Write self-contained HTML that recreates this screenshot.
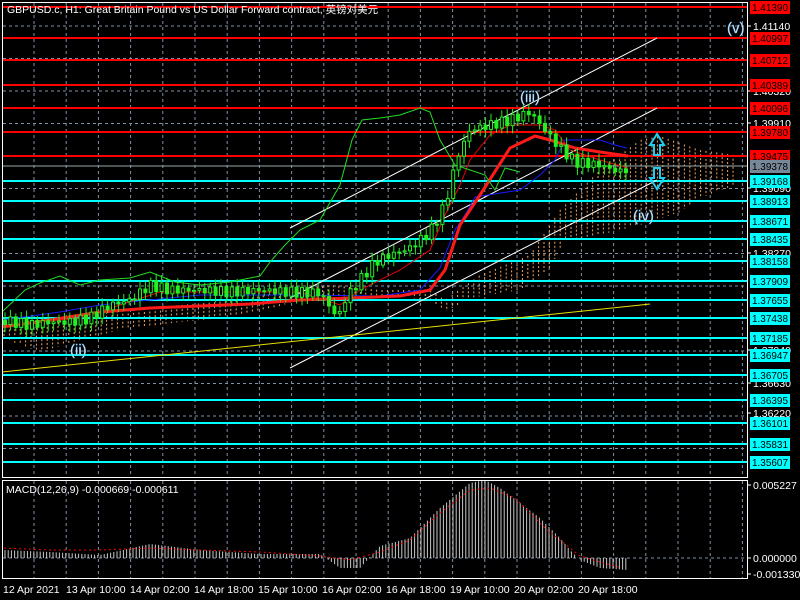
<!DOCTYPE html>
<html><head><meta charset="utf-8"><style>
html,body{margin:0;padding:0;background:#000;width:800px;height:600px;overflow:hidden}
svg{display:block}
text{font-family:"Liberation Sans","Noto Sans CJK SC",sans-serif}
</style></head><body>
<svg id="s" width="800" height="600" xmlns="http://www.w3.org/2000/svg">
<rect width="800" height="600" fill="#000"/>
<g id="grid" stroke="#8090a8" stroke-width="1" stroke-dasharray="3,3"></g>
<g id="cloud" stroke="#f4a460" stroke-width="1" stroke-dasharray="2,2"></g>
<g id="lv" stroke-width="2"></g>
<line x1="2" y1="166" x2="747" y2="166" stroke="#9aa" stroke-width="1"/>
<g stroke="#fff" stroke-width="1">
<line x1="290" y1="228" x2="657" y2="38"/>
<line x1="290" y1="298" x2="657" y2="108"/>
<line x1="290" y1="368" x2="657" y2="180"/>
</g>
<line x1="2" y1="372" x2="650" y2="304" stroke="#e8e000" stroke-width="1"/>
<polyline fill="none" stroke="#1a1aff" stroke-width="1" points="2,320 60,312 100,305 200,295 300,295 380,296 420,290 440,268 455,230 465,215 475,197 520,190 540,175 555,160 565,140 600,140 615,145 627,148"/>
<polyline fill="none" stroke="#ff1a1a" stroke-width="3" points="2,327 50,320 100,312 150,308 200,306 250,304 300,300 350,298 400,296 430,290 445,270 460,225 480,195 510,148 535,136 550,140 575,148 600,152 628,156"/>
<polyline fill="none" stroke="#e00" stroke-width="1" points="2,325 40,322 80,318 120,305 160,292 220,292 300,292 340,305 360,290 400,270 430,250 445,215 460,185 470,160 490,135 510,125 540,125 555,130 570,150 600,160 628,168"/>
<polyline fill="none" stroke="#22dd22" stroke-width="1" points="2,312 25,290 40,283 60,276 80,285 100,280 130,278 150,272 175,282 200,285 230,282 260,276 270,262 285,245 300,230 320,220 340,185 352,140 362,120 380,118 400,115 420,108 430,112 440,140 455,165 470,170 485,175 495,190 505,168 520,172"/>
<g id="candles"></g>
<g id="macd"></g>
<polyline id="sig" fill="none" stroke="#f00" stroke-width="1" stroke-dasharray="2,3"/>
<g fill="none" stroke="#22ccee" stroke-width="2">
<path d="M650,145 L657,134 L664,145 L660,145 L660,155 L654,155 L654,145 Z"/>
<path d="M654,168 L660,168 L660,178 L664,178 L657,189 L650,178 L654,178 Z"/>
</g>
<g font-size="15" fill="#e8f0ff" stroke="#5ad" stroke-width="0.4">
<text x="727" y="33">(v)</text>
<text x="520" y="102">(iii)</text>
<text x="633" y="221">(iv)</text>
<text x="70" y="355">(ii)</text>
</g>
<g stroke="#fff" fill="none" stroke-width="1">
<rect x="2.5" y="2.5" width="745" height="475"/>
<rect x="2.5" y="480.5" width="745" height="98"/>
</g>
<g id="axis" font-size="10.5"></g>
<text x="7" y="13" font-size="10.5" fill="#fff">GBPUSD.c, H1:  Great Britain Pound vs US Dollar Forward contract, 英镑对美元</text>
<text x="6" y="493" font-size="10.5" fill="#fff">MACD(12,26,9) -0.000669 -0.000611</text>
<g font-size="10.5" fill="#fff">
<text x="3" y="593">12 Apr 2021</text><text x="66" y="593">13 Apr 10:00</text><text x="130" y="593">14 Apr 02:00</text><text x="194" y="593">14 Apr 18:00</text><text x="258" y="593">15 Apr 10:00</text><text x="322" y="593">16 Apr 02:00</text><text x="386" y="593">16 Apr 18:00</text><text x="450" y="593">19 Apr 10:00</text><text x="514" y="593">20 Apr 02:00</text><text x="578" y="593">20 Apr 18:00</text>
</g>
</svg>
<script>
var NS="http://www.w3.org/2000/svg";
function el(p,t,a){var e=document.createElementNS(NS,t);for(var k in a)e.setAttribute(k,a[k]);p.appendChild(e);return e;}
var g=document.getElementById('grid');
for(var x=34;x<747;x+=32.2){el(g,'line',{x1:x,y1:3,x2:x,y2:477});el(g,'line',{x1:x,y1:481,x2:x,y2:578});}
for(var y=26;y<477;y+=32.5)el(g,'line',{x1:3,y1:y,x2:747,y2:y});
el(g,'line',{x1:3,y1:558,x2:747,y2:558});
var lv=document.getElementById('lv'),ax=document.getElementById('axis');
var reds=[[7,"1.41390"],[38,"1.40997"],[60,"1.40712"],[85,"1.40389"],[108,"1.40096"],[132,"1.39780"],[156,"1.39475"]];
var cy=[[181,"1.39168"],[201,"1.38913"],[221,"1.38671"],[239,"1.38435"],[261,"1.38158"],[281,"1.37909"],[300,"1.37655"],[318,"1.37438"],[338,"1.37185"],[355,"1.36947"],[375,"1.36705"],[400,"1.36395"],[423,"1.36101"],[444,"1.35831"],[462,"1.35607"]];
[[26,"1.41140"],[91,"1.40320"],[123,"1.39910"],[188,"1.39090"],[253,"1.38270"],[350,"1.37040"],[383,"1.36630"],[413,"1.36220"],[485,"0.005227"],[558,"0.000000"],[574,"-0.001330"]].forEach(function(a){el(ax,'line',{x1:747,y1:a[0],x2:751,y2:a[0],stroke:'#fff'});var t=el(ax,'text',{x:753,y:a[0]+4,fill:'#fff'});t.textContent=a[1];});
function lab(arr,c,tc){arr.forEach(function(a){el(lv,'line',{x1:3,y1:a[0],x2:747,y2:a[0],stroke:c});el(ax,'rect',{x:750,y:a[0]-6,width:40,height:13,fill:c});var t=el(ax,'text',{x:752,y:a[0]+4,fill:tc,textLength:36,lengthAdjust:'spacingAndGlyphs'});t.textContent=a[1];});}
lab(reds,'#ff0000','#000');lab(cy,'#00ffff','#000');
el(ax,'rect',{x:750,y:160,width:40,height:13,fill:'#778899'});var t=el(ax,'text',{x:752,y:170,fill:'#000',textLength:36,lengthAdjust:'spacingAndGlyphs'});t.textContent="1.39378";
var cl=document.getElementById('cloud');
function interp(pts,x){for(var i=0;i<pts.length-1;i++){if(x>=pts[i][0]&&x<=pts[i+1][0]){var f=(x-pts[i][0])/(pts[i+1][0]-pts[i][0]);return pts[i][1]+f*(pts[i+1][1]-pts[i][1]);}}return null;}
var up=[[2,322],[60,318],[120,310],[180,305],[240,300],[280,292],[330,285],[380,290],[430,290],[445,300],[480,275],[530,255],[560,210],[600,170],[640,140],[660,136],[700,150],[735,155]];
var lo=[[2,338],[40,352],[80,340],[120,330],[180,322],[220,318],[260,312],[300,300],[340,298],[380,295],[430,300],[445,312],[470,298],[520,290],[550,268],[565,240],[600,235],[640,225],[680,212],[700,198],[735,185]];
for(var x=4;x<735;x+=5.4){var a=interp(up,x),b=interp(lo,x);if(a!=null&&b!=null)el(cl,'line',{x1:x,y1:Math.min(a,b),x2:x,y2:Math.max(a,b)});}
var pr=[[2,320],[30,325],[50,322],[70,322],[90,318],[110,305],[130,300],[150,285],[170,290],[200,290],[230,292],[260,290],[290,292],[320,293],[338,318],[345,300],[360,280],[375,262],[390,255],[410,248],[430,232],[445,205],[458,155],[470,130],[490,125],[510,120],[530,112],[545,130],[560,148],[575,162],[600,165],[620,172],[628,168]];
var cg=document.getElementById('candles'),prev=interp(pr,2);
for(var x=5;x<=628;x+=5.4){var c=interp(pr,x)+(Math.sin(x*1.7)*5);var o=prev;var hi=Math.min(o,c)-3-Math.abs(Math.sin(x))*5,l=Math.max(o,c)+3+Math.abs(Math.cos(x*1.3))*5;
el(cg,'line',{x1:x,y1:hi,x2:x,y2:l,stroke:'#22ee22'});
el(cg,'rect',{x:x-1.5,y:Math.min(o,c),width:3,height:Math.max(1,Math.abs(c-o)),fill:c<o?'#000':'#22ee22',stroke:'#22ee22','stroke-width':1});prev=c;}
var mp=[[4,-8],[50,-6],[100,-3],[150,-14],[200,-8],[260,-4],[320,-4],[340,10],[360,10],[380,-12],[410,-20],[440,-50],[470,-75],[485,-78],[500,-70],[520,-55],[540,-40],[560,-20],[570,-8],[580,2],[600,10],[628,12]];
var sp=[[4,-10],[50,-8],[100,-8],[150,-10],[200,-8],[260,-6],[320,-2],[350,2],[380,-6],[410,-18],[440,-45],[470,-68],[490,-70],[515,-60],[545,-30],[580,-2],[600,4],[622,10]];
var mg=document.getElementById('macd');
for(var x=5;x<=628;x+=3.2){var v=interp(mp,x);if(v==null)continue;el(mg,'line',{x1:x,y1:558,x2:x,y2:558+v,stroke:'#c8c8c8'});}
var s='';for(var x=4;x<=622;x+=4){s+=x+','+(558+interp(sp,x))+' ';}
document.getElementById('sig').setAttribute('points',s);
</script>
</body></html>
